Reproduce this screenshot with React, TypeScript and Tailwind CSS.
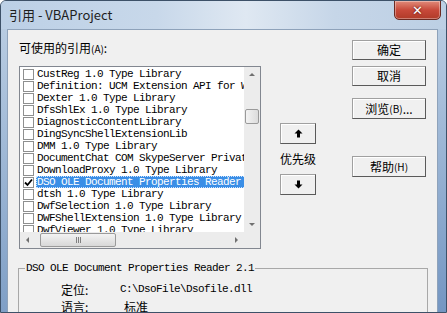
import React from "react";

const rows = [
  { name: "CustReg 1.0 Type Library" },
  { name: "Definition: UCM Extension API for Windows" },
  { name: "Dexter 1.0 Type Library" },
  { name: "DfsShlEx 1.0 Type Library" },
  { name: "DiagnosticContentLibrary" },
  { name: "DingSyncShellExtensionLib" },
  { name: "DMM 1.0 Type Library" },
  { name: "DocumentChat COM SkypeServer Private" },
  { name: "DownloadProxy 1.0 Type Library" },
  { name: "DSO OLE Document Properties Reader 2.1", checked: true, selected: true },
  { name: "dtsh 1.0 Type Library" },
  { name: "DwfSelection 1.0 Type Library" },
  { name: "DWFShellExtension 1.0 Type Library" },
  { name: "DwfViewer 1.0 Type Library" },
];

const mono = "font-['Liberation_Mono',monospace] text-[11px] tracking-[-0.6px]";
const cjk = "font-['Noto_Sans_CJK_SC','Noto_Sans',sans-serif]";

function Button({ children, className = "" }: { children: React.ReactNode; className?: string }) {
  return (
    <div
      className={`flex items-center justify-center border border-[#a0a0a0] border-b-[#5a5a5a] border-r-[#5a5a5a] bg-[#f0f0f0] shadow-[inset_1px_1px_0_#ffffff] text-[12px] text-black ${cjk} ${className}`}
    >
      {children}
    </div>
  );
}

function Arrow({ down }: { down?: boolean }) {
  return (
    <svg width="9" height="9" viewBox="0 0 9 9" className={down ? "rotate-180" : ""}>
      <path d="M4.5 0.5 L8.5 4.5 L6 4.5 L6 8.5 L3 8.5 L3 4.5 L0.5 4.5 Z" fill="#000" />
    </svg>
  );
}

function Tri({ dir }: { dir: "up" | "down" | "left" | "right" }) {
  const d = {
    up: "M1 5 L4 2 L7 5 Z",
    down: "M1 3 L4 6 L7 3 Z",
    left: "M5 1 L2 4 L5 7 Z",
    right: "M3 1 L6 4 L3 7 Z",
  }[dir];
  return (
    <svg width="8" height="8" viewBox="0 0 8 8">
      <path d={d} fill="#707070" />
    </svg>
  );
}

function Checkbox({ checked }: { checked?: boolean }) {
  return (
    <div className="flex h-[11px] w-[11px] shrink-0 items-center justify-center border border-[#8e8f8f] bg-white">
      {checked && (
        <svg width="9" height="9" viewBox="0 0 9 9">
          <path d="M1 4.5 L3.5 7 L8 1.5" stroke="#000" strokeWidth="1.8" fill="none" />
        </svg>
      )}
    </div>
  );
}

function ReferenceList() {
  return (
    <div className="grid h-[183px] w-[242px] grid-cols-[1fr_16px] grid-rows-[1fr_16px] border border-[#828790] bg-white">
      <div className="overflow-hidden pt-[1px]">
        {rows.map((row) => (
          <div key={row.name} className="flex h-[12px] items-center pl-[3px]">
            <Checkbox checked={row.checked} />
            <div
              className={`ml-[2px] h-[12px] whitespace-nowrap pl-[1px] pr-[1px] leading-[12px] ${mono} ${
                row.selected ? "bg-[#3a8ee6] text-white outline outline-1 outline-dotted outline-[#cfe4ff] -outline-offset-1" : "text-black"
              }`}
            >
              {row.name}
            </div>
          </div>
        ))}
      </div>
      <div className="flex flex-col items-center bg-[#ececec]">
        <div className="flex h-[16px] items-center justify-center">
          <Tri dir="up" />
        </div>
        <div className="mt-[26px] h-[15px] w-[14px] rounded-[2px] border border-[#9a9a9a] bg-gradient-to-r from-[#f3f3f3] to-[#dcdcdc]" />
        <div className="flex-1" />
        <div className="flex h-[16px] items-center justify-center">
          <Tri dir="down" />
        </div>
      </div>
      <div className="flex items-center bg-[#ececec]">
        <div className="flex w-[16px] items-center justify-center">
          <Tri dir="left" />
        </div>
        <div className="ml-[4px] flex h-[14px] w-[76px] items-center justify-center rounded-[2px] border border-[#9a9a9a] bg-gradient-to-b from-[#f3f3f3] to-[#d8d8d8]">
          <div className="flex gap-[1px]">
            <div className="h-[6px] w-[1px] bg-[#808080]" />
            <div className="h-[6px] w-[1px] bg-[#808080]" />
            <div className="h-[6px] w-[1px] bg-[#808080]" />
          </div>
        </div>
        <div className="flex-1" />
        <div className="flex w-[16px] items-center justify-center">
          <Tri dir="right" />
        </div>
      </div>
      <div className="bg-[#ececec]" />
    </div>
  );
}

export default function App() {
  return (
    <div className="h-[313px] w-[447px] overflow-hidden rounded-t-[6px] border border-[#3d5168] bg-[#b9cde3]">
      <div className="relative flex h-[28px] items-center bg-[linear-gradient(90deg,#bcd0e6_0%,#c8d8ea_35%,#dfe8f2_55%,#c6d6e8_75%,#bccfe4_100%)] pl-[8px]">
        <span className={`text-[13px] text-[#1e1e1e] ${cjk}`}>引用 - VBAProject</span>
        <div className="absolute right-[5px] top-[-1px] flex h-[20px] w-[47px] items-center justify-center rounded-b-[5px] border border-[#6b2a22] bg-gradient-to-b from-[#e08a7a] via-[#c8493a] to-[#b03a28] shadow-[inset_0_0_0_1px_rgba(255,255,255,0.35)]">
          <span className="font-['DejaVu_Sans',sans-serif] text-[13px] font-bold leading-none text-white [text-shadow:0_0_2px_#400]">✕</span>
        </div>
      </div>
      <div className="flex h-[284px]">
        <div className="w-[6px] bg-gradient-to-b from-[#b8cce2] to-[#7f9fc6]" />
        <div className="flex-1 border-l border-t border-r border-[#8ea2ba] bg-[#f0f0f0]">
          <div className="flex">
            <div className="ml-[11px] flex flex-col">
              <div className={`mt-[10px] h-[16px] text-[12px] leading-[16px] text-black ${cjk}`}>
                可使用的引用<span className="text-[10px]">(A)</span>:
              </div>
              <div className="mt-[10px]">
                <ReferenceList />
              </div>
            </div>
            <div className="ml-[19px] flex w-[36px] flex-col">
              <Button className="mt-[93px] h-[21px]">
                <Arrow />
              </Button>
              <div className={`mt-[7px] h-[16px] text-[12px] leading-[16px] text-black ${cjk}`}>优先级</div>
              <Button className="mt-[7px] h-[21px]">
                <Arrow down />
              </Button>
            </div>
            <div className="ml-[36px] flex w-[74px] flex-col">
              <Button className="mt-[10px] h-[20px]">确定</Button>
              <Button className="mt-[6px] h-[20px]">取消</Button>
              <Button className="mt-[12px] h-[21px]">
                浏览<span className="text-[10px]">(B)</span>...
              </Button>
              <Button className="mt-[37px] h-[21px]">
                帮助<span className="text-[10px]">(H)</span>
              </Button>
            </div>
          </div>
          <div className="relative ml-[10px] mt-[19px] h-[60px] w-[410px] border border-b-0 border-[#a8a8a8]">
            <div className={`absolute left-[6px] top-[-7px] bg-[#f0f0f0] px-[1px] leading-[12px] text-black ${mono}`}>
              DSO OLE Document Properties Reader 2.1
            </div>
            <div className="ml-[42px] mt-[12px] flex h-[17px] items-center">
              <span className={`w-[59px] text-[12px] text-black ${cjk}`}>定位:</span>
              <span className={`text-black ${mono}`}>C:\DsoFile\Dsofile.dll</span>
            </div>
            <div className="ml-[42px] flex h-[17px] items-center">
              <span className={`w-[63px] text-[12px] text-black ${cjk}`}>语言:</span>
              <span className={`text-[12px] text-black ${cjk}`}>标准</span>
            </div>
          </div>
        </div>
        <div className="w-[8px] bg-gradient-to-b from-[#b8cce2] to-[#7496c2]" />
      </div>
    </div>
  );
}
